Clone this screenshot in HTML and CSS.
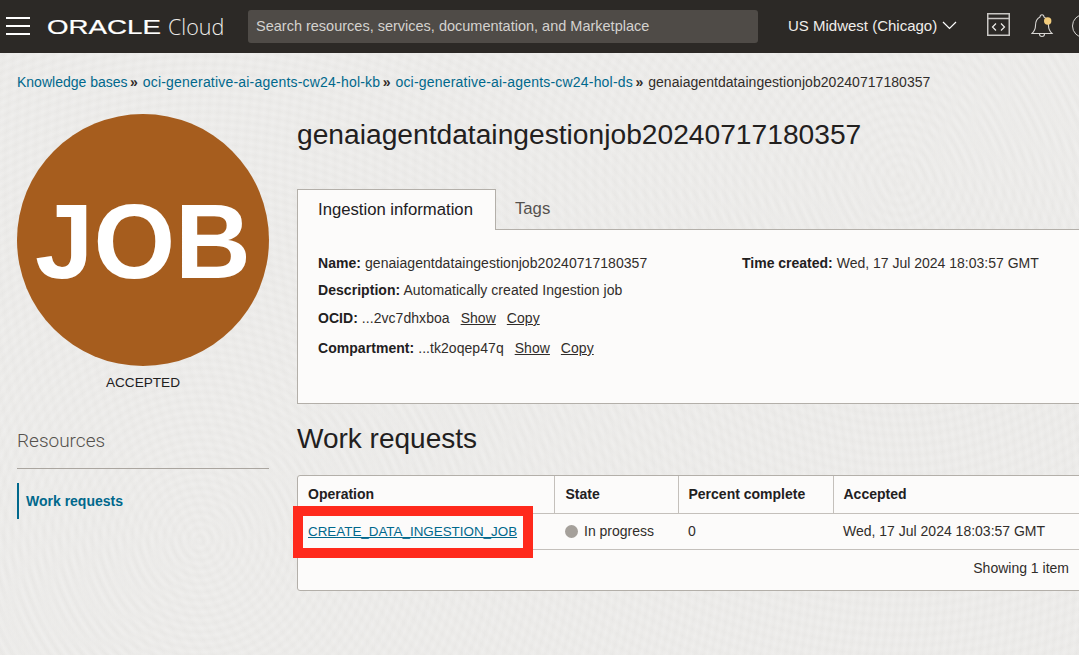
FILE: index.html
```html
<!DOCTYPE html>
<html lang="en">
<head>
    <meta charset="UTF-8">
    <title>Job details</title>
    <link rel="stylesheet" href="styles.css">
</head>
<body>
<header class="topbar">
    <button class="burger" aria-label="Menu"><span></span><span></span><span></span></button>
    <div class="brand"><span class="brand_oracle">ORACLE</span><span class="brand_cloud">Cloud</span></div>
    <div class="search">Search resources, services, documentation, and Marketplace</div>
    <div class="region">US Midwest (Chicago)
        <svg class="region_arrow" width="15" height="9" viewBox="0 0 15 9"><path d="M1 1l6.5 6.5L14 1" fill="none" stroke="#fff" stroke-width="1.2"/></svg>
    </div>
    <svg class="icon_shell" width="24" height="24" viewBox="0 0 24 24" fill="none" stroke="#c9c7c4" stroke-width="1.5">
        <rect x=".75" y=".75" width="21.5" height="21.500"/>
        <path d="M.75 5.5h21.5"/>
        <path d="M9 10.500l-3.500 3.500 3.500 3.500M14 10.500l3.500 3.500-3.500 3.500" stroke="#f0eeeb" stroke-width="1.2"/>
    </svg>
    <svg class="icon_bell" width="24" height="26" viewBox="0 0 24 26" fill="none" stroke="#d8d6d3" stroke-width="1.1">
        <path d="M1 21.500c2-2 3.500-4 3.500-8 0-4 1.500-7 4.500-8.500.2-3 3.800-3 4 0 3 1.500 4.500 4.500 4.500 8.500 0 4 1.500 6 3.500 8z"/>
        <path d="M8.500 22a2.500 2.500 0 0 0 5 0"/>
        <circle cx="16.700" cy="9" r="3.700" fill="#f2cc7c" stroke="none"/>
    </svg>
    <span class="icon_help"></span>
</header>

<div class="page">
    <nav class="crumbs">
        <a href="#">Knowledge bases</a><span class="sep">»</span>
        <a class="crumb_long" href="#">oci-generative-ai-agents-cw24-hol-kb</a><span class="sep">»</span>
        <a class="crumb_long" href="#">oci-generative-ai-agents-cw24-hol-ds</a><span class="sep">»</span>
        <span class="crumb_last">genaiagentdataingestionjob20240717180357</span>
    </nav>

    <div class="columns">
        <aside class="side">
            <div class="badge">JOB</div>
            <div class="badge_state">ACCEPTED</div>
            <h3 class="side_title">Resources</h3>
            <a class="side_link" href="#">Work requests</a>
        </aside>

        <main class="content">
            <h1>genaiagentdataingestionjob20240717180357</h1>

            <ul class="tabs">
                <li class="tab tab_on">Ingestion information</li>
                <li class="tab">Tags</li>
            </ul>
            <section class="panel">
                <div class="info_col">
                    <p class="line"><b>Name:</b> genaiagentdataingestionjob20240717180357</p>
                    <p class="line"><b>Description:</b> Automatically created Ingestion job</p>
                    <p class="line"><b>OCID:</b> ...2vc7dhxboa <a class="act" href="#">Show</a> <a class="act" href="#">Copy</a></p>
                    <p class="line"><b>Compartment:</b> ...tk2oqep47q <a class="act" href="#">Show</a> <a class="act" href="#">Copy</a></p>
                </div>
                <div class="info_col2">
                    <p class="line"><b>Time created:</b> Wed, 17 Jul 2024 18:03:57 GMT</p>
                </div>
            </section>

            <h2>Work requests</h2>
            <div class="table_box">
                <table>
                    <thead>
                    <tr>
                        <th class="c1">Operation</th>
                        <th class="c2">State</th>
                        <th class="c3">Percent complete</th>
                        <th class="c4">Accepted</th>
                    </tr>
                    </thead>
                    <tbody>
                    <tr>
                        <td><a class="op_link" href="#">CREATE_DATA_INGESTION_JOB</a></td>
                        <td class="state"><span class="dot"></span>In progress</td>
                        <td>0</td>
                        <td>Wed, 17 Jul 2024 18:03:57 GMT</td>
                    </tr>
                    </tbody>
                </table>
                <div class="table_foot">Showing 1 item</div>
                <span class="mark"></span>
            </div>
        </main>
    </div>
</div>
</body>
</html>
```

FILE: styles.css
```css
*{
    margin: 0;
    padding: 0;
    list-style: none;
    box-sizing: border-box;
}
html,body{
    height: 100%;
    overflow: hidden;
}
body{
    font-family: "Liberation Sans", Arial, sans-serif;
    font-size: 14px;
    color: #312d2a;
    background-color: #ecebe9;
    background-image:
        repeating-radial-gradient(circle at 200px 540px, rgba(255,255,255,.1) 0, rgba(0,0,0,.006) 4px, rgba(255,255,255,.1) 8px),
        repeating-radial-gradient(circle at 900px 180px, rgba(255,255,255,.08) 0, rgba(0,0,0,.006) 5px, rgba(255,255,255,.08) 10px);
}
a{
    color: #00688c;
}

/* top bar */
.topbar{
    height: 53px;
    background-color: #2c2926;
    display: flex;
    align-items: center;
    color: #fff;
    overflow: hidden;
}
.burger{
    width: 24px;
    flex: none;
    margin-left: 6px;
    background: none;
    border: none;
    display: flex;
    flex-direction: column;
    gap: 6px;
    margin-bottom: 1px;
}
.burger span{
    display: block;
    height: 2px;
    background-color: #fff;
}
.brand{
    width: 201px;
    flex: none;
    margin-left: 17px;
    display: flex;
    align-items: center;
}
.brand_oracle{
    font-size: 19.500px;
    line-height: 24px;
    display: inline-block;
    width: 113px;
    flex: none;
    transform: scaleX(1.42);
    transform-origin: left center;
    white-space: nowrap;
    -webkit-text-stroke: .2px #fff;
}
.brand_cloud{
    font-family: "Open Sans", sans-serif;
    font-weight: 300;
    font-size: 21.500px;
    margin-left: 8px;
    color: #efedea;
}
.search{
    width: 510px;
    flex: none;
    height: 33px;
    margin-bottom: 1px;
    padding-left: 8px;
    background-color: #4f4b47;
    border-radius: 3px;
    color: #d4d2cf;
    font-size: 14.500px;
    line-height: 33px;
    white-space: nowrap;
}
.region{
    margin-left: 30px;
    margin-bottom: 2px;
    width: 199px;
    flex: none;
    font-size: 15px;
    color: #f0eeeb;
    white-space: nowrap;
}
.region_arrow{
    margin-left: 1px;
    vertical-align: 1px;
}
.icon_shell{
    margin-right: 20px;
    margin-bottom: 3px;
    flex: none;
}
.icon_bell{
    margin-right: 17px;
    margin-bottom: 3px;
    flex: none;
}
.icon_help{
    flex: none;
    width: 24px;
    height: 24px;
    margin-bottom: 1px;
    border: 1px solid #d8d6d3;
    border-radius: 50%;
}

/* page */
.page{
    padding: 0 0 0 17px;
    width: 1500px;
}
.crumbs{
    height: 58px;
    padding-top: 21px;
    font-size: 14px;
    line-height: 16px;
    white-space: nowrap;
}
.crumbs a{
    text-decoration: none;
}
.crumb_long{
    letter-spacing: .2px;
}
.crumb_last{
    letter-spacing: .05px;
}
.crumbs .sep{
    margin: 0 1px 0 2.500px;
    font-weight: bold;
    color: #312d2a;
}
.columns{
    display: flex;
}
.side{
    width: 252px;
    flex: none;
    margin-top: 3px;
}
.badge{
    width: 252px;
    height: 252px;
    border-radius: 50%;
    background-color: #a65d1e;
    color: #fff;
    font-size: 105px;
    font-weight: bold;
    line-height: 256px;
    text-align: center;
}
.badge_state{
    margin-top: 9px;
    font-size: 13.600px;
    line-height: 16px;
    text-align: center;
    color: #22201e;
}
.side_title{
    margin-top: 38px;
    height: 40px;
    border-bottom: 1px solid #aaa59f;
    font-family: Roboto, sans-serif;
    font-size: 19px;
    font-weight: 300;
    line-height: 24px;
    color: #55514d;
}
.side_link{
    display: block;
    margin-top: 14px;
    height: 36px;
    border-left: 2px solid #00688c;
    padding-left: 7px;
    font-size: 14px;
    font-weight: bold;
    line-height: 36px;
    text-decoration: none;
}
.content{
    margin-left: 28px;
    width: 900px;
    flex: none;
}
h1{
    font-size: 28.200px;
    font-weight: normal;
    line-height: 36px;
    margin-top: 5px;
    color: #22201e;
}
.tabs{
    display: flex;
    margin-top: 37px;
    height: 41px;
    position: relative;
    z-index: 1;
}
.tab{
    padding: 0 20px;
    font-size: 16.700px;
    line-height: 40px;
    color: #55514d;
}
.tab_on{
    background-color: #fcfbfa;
    border: 1px solid #b3afa9;
    border-bottom: none;
    color: #22201e;
    line-height: 39px;
    width: 199px;
    white-space: nowrap;
}
.tabs .tab:last-child{
    flex: 1;
    padding-left: 19px;
    border-bottom: 1px solid #b3afa9;
}
.panel{
    margin-top: -1px;
    height: 175px;
    background-color: #fcfbfa;
    border: 1px solid #b3afa9;
    border-top: none;
    padding: 21px 20px 0;
    display: flex;
    font-size: 14px;
    color: #312d2a;
}
.info_col{
    width: 424px;
    letter-spacing: .05px;
}
.line{
    height: 27px;
    line-height: 27px;
    white-space: nowrap;
}
.line:nth-child(2){
    height: 28px;
}
.line:nth-child(n+3){
    height: 30px;
    line-height: 26px;
}
.line b{
    color: #22201e;
}
.act{
    color: #312d2a;
    margin-left: 7px;
}
h2{
    font-size: 28px;
    font-weight: normal;
    line-height: 36px;
    margin-top: 17px;
    color: #22201e;
}
.table_box{
    margin-top: 18px;
    height: 116px;
    background-color: #fcfbfa;
    border: 1px solid #b3afa9;
    border-radius: 3px;
    position: relative;
}
table{
    border-collapse: collapse;
    table-layout: fixed;
    width: 898px;
    font-size: 14px;
}
th{
    height: 37px;
    text-align: left;
    padding-left: 10px;
    font-weight: bold;
    color: #22201e;
    border-bottom: 1px solid #c4c0bb;
    border-right: 1px solid #c4c0bb;
}
td{
    height: 36px;
    padding-left: 10px;
    border-bottom: 1px solid #c4c0bb;
    color: #312d2a;
}
.c1{ width: 256px; }
.c2{ width: 124px; padding-left: 11px; }
.c3{ width: 155px; }
.c4{ width: 363px; border-right: none; }
td.state{
    padding-left: 11px;
}
.op_link{
    font-size: 13.400px;
}
.dot{
    display: inline-block;
    width: 13px;
    height: 13px;
    border-radius: 50%;
    background-color: #a5a09a;
    margin-right: 6px;
    vertical-align: -2px;
}
.table_foot{
    width: 781px;
    text-align: right;
    padding-right: 10px;
    height: 38px;
    line-height: 36px;
    font-size: 14px;
}
.mark{
    position: absolute;
    left: -5px;
    top: 30px;
    width: 240px;
    height: 52px;
    border: 10px solid #ff2a1c;
}
```
